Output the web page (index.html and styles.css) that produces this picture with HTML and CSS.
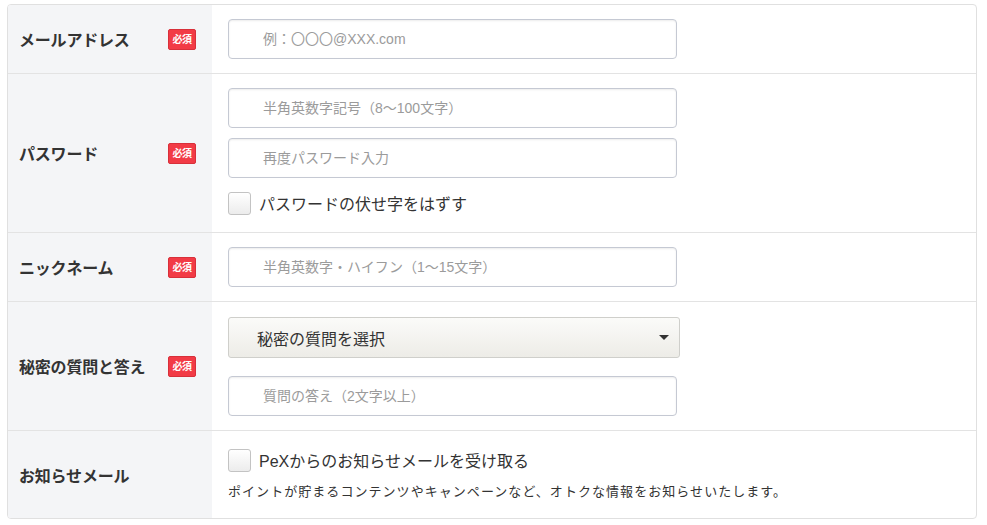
FILE: index.html
```html
<!DOCTYPE html>
<html lang="ja">
<head>
    <meta charset="UTF-8">
    <meta name="viewport" content="width=device-width, initial-scale=1.0">
    <title>会員登録</title>
    <link rel="stylesheet" href="styles.css">
</head>
<body>
    <div class="form-table">
        <!-- メールアドレス -->
        <div class="row">
            <div class="row-head">
                <span class="label">メールアドレス</span>
                <span class="required">必須</span>
            </div>
            <div class="row-body">
                <input class="text-input" type="email" placeholder="例：〇〇〇@XXX.com">
            </div>
        </div>

        <!-- パスワード -->
        <div class="row">
            <div class="row-head">
                <span class="label">パスワード</span>
                <span class="required">必須</span>
            </div>
            <div class="row-body row-body-password">
                <input class="text-input" type="password" placeholder="半角英数字記号（8〜100文字）">
                <input class="text-input gap-s" type="password" placeholder="再度パスワード入力">
                <label class="check gap-m">
                    <input type="checkbox">
                    <span class="check-box"></span>
                    <span>パスワードの伏せ字をはずす</span>
                </label>
            </div>
        </div>

        <!-- ニックネーム -->
        <div class="row">
            <div class="row-head">
                <span class="label">ニックネーム</span>
                <span class="required">必須</span>
            </div>
            <div class="row-body">
                <input class="text-input" type="text" placeholder="半角英数字・ハイフン（1〜15文字）">
            </div>
        </div>

        <!-- 秘密の質問 -->
        <div class="row">
            <div class="row-head">
                <span class="label">秘密の質問と答え</span>
                <span class="required">必須</span>
            </div>
            <div class="row-body row-body-question">
                <div class="select">
                    <span>秘密の質問を選択</span>
                    <span class="select-arrow"></span>
                </div>
                <input class="text-input gap-l" type="text" placeholder="質問の答え（2文字以上）">
            </div>
        </div>

        <!-- お知らせメール -->
        <div class="row">
            <div class="row-head">
                <span class="label">お知らせメール</span>
            </div>
            <div class="row-body row-body-mail">
                <label class="check">
                    <input type="checkbox">
                    <span class="check-box"></span>
                    <span>PeXからのお知らせメールを受け取る</span>
                </label>
                <p class="note">ポイントが貯まるコンテンツやキャンペーンなど、オトクな情報をお知らせいたします。</p>
            </div>
        </div>
    </div>
</body>
</html>
```

FILE: styles.css
```css
body {
    margin: 0;
    padding: 4px 0 0 7px;
    font-family: "Liberation Sans", "Noto Sans CJK JP", sans-serif;
    color: #333;
    background: #fff;
}
.form-table {
    width: 968px;
    border: 1px solid #e0e0e0;
    border-radius: 4px;
    overflow: hidden;
}
.row {
    display: flex;
    border-top: 1px solid #e3e3e3;
}
.row:first-child {
    border-top: none;
}
.row-head {
    width: 204px;
    flex-shrink: 0;
    box-sizing: border-box;
    padding: 0 16px 0 11px;
    background: #f4f5f7;
    display: flex;
    align-items: center;
    justify-content: space-between;
}
.label {
    font-size: 16px;
    font-weight: bold;
    color: #333;
    letter-spacing: -0.2px;
}
.required {
    width: 28px;
    height: 21px;
    box-sizing: border-box;
    background: #f23b46;
    border: 1px solid #d8303a;
    border-radius: 2px;
    color: #fff;
    font-size: 10px;
    font-weight: bold;
    line-height: 19px;
    text-align: center;
    letter-spacing: -0.5px;
}
.row-body {
    flex: 1;
    padding: 14px 16px;
    display: flex;
    flex-direction: column;
    align-items: flex-start;
}
.row-body-password {
    padding-bottom: 17px;
}
.row-body-question {
    padding-top: 15px;
}
.row-body-mail {
    padding: 17px 16px 16px;
}
.text-input {
    width: 449px;
    height: 40px;
    box-sizing: border-box;
    margin: 0;
    padding: 0 0 0 34px;
    border: 1px solid #c5c9d3;
    border-radius: 4px;
    box-shadow: inset 0 1px 2px rgba(0, 0, 0, 0.08);
    font-family: inherit;
    font-size: 14px;
    color: #333;
    outline: none;
}
.text-input::placeholder {
    color: #9b9b9b;
}
.gap-s {
    margin-top: 10px;
}
.gap-m {
    margin-top: 13px;
}
.gap-l {
    margin-top: 18px;
}
.select {
    width: 452px;
    height: 41px;
    box-sizing: border-box;
    padding: 0 10px 0 28px;
    border: 1px solid #cfcfcb;
    border-radius: 3px;
    background: linear-gradient(#fbfbf9, #edece7);
    display: flex;
    align-items: center;
    justify-content: space-between;
    font-size: 16px;
    color: #333;
}
.select-arrow {
    width: 0;
    height: 0;
    border-left: 5px solid transparent;
    border-right: 5px solid transparent;
    border-top: 5px solid #333;
}
.check {
    display: flex;
    align-items: center;
    height: 24px;
    font-size: 16px;
    color: #333;
}
.check input {
    display: none;
}
.check-box {
    width: 23px;
    height: 23px;
    box-sizing: border-box;
    border: 1px solid #c3c3c3;
    border-radius: 3px;
    background: linear-gradient(#fff, #ececec);
    margin-right: 8px;
}
.note {
    margin: 10px 0 0;
    font-size: 13px;
    line-height: 20px;
    letter-spacing: 1.05px;
    color: #333;
}
```
